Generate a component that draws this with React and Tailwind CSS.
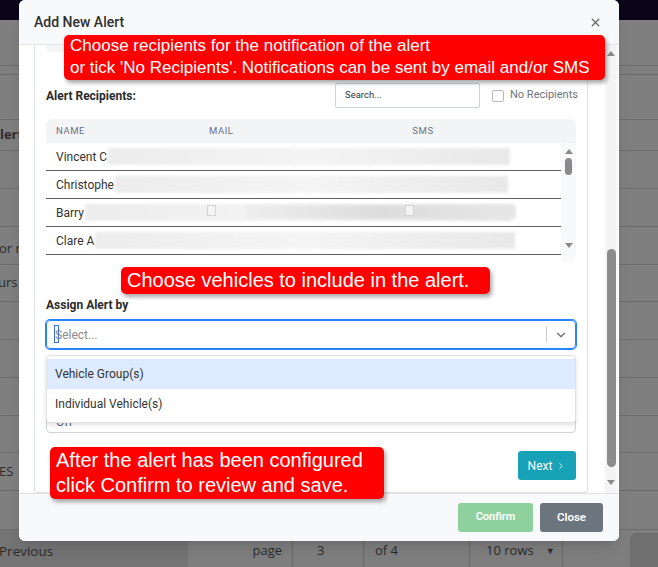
import { X, ChevronDown, ChevronRight } from 'lucide-react'

const BG_ROWS = [
  { h: 'h-[46px]' },
  { h: 'h-[9px]' },
  { h: 'h-[45px]' },
  { h: 'h-[31px]', text: 'Alert', cls: '-ml-[9px] font-bold' },
  { h: 'h-[38px]' },
  { h: 'h-[38px]' },
  { h: 'h-[38px]', text: 'or m', cls: '-ml-[1px] pt-[6px]' },
  { h: 'h-[37px]', text: 'urs ', tail: 'i', cls: '-ml-[2px]' },
  { h: 'h-[38px]' },
  { h: 'h-[38px]' },
  { h: 'h-[38px]' },
  { h: 'h-[37px]' },
  { h: 'h-[38px]', text: 'ES', cls: '-ml-[1px]' },
  { h: 'h-[39px]' },
]

const RECIPIENTS = [
  { name: 'Vincent C', blur: 'mr-[51px]' },
  { name: 'Christophe', blur: 'mr-[53px]' },
  { name: 'Barry', blur: 'mr-[49px]', marks: true },
  { name: 'Clare A', blur: 'mr-[46px]' },
]

function Background() {
  return (
    <div className="flex h-full flex-col font-['Open_Sans',sans-serif] text-[13px] text-[#2b2b2b]">
      <div className="h-[20px] shrink-0 bg-[#0a0617]" />
      {BG_ROWS.map((r, i) => (
        <div key={i} className={`${r.h} flex shrink-0 items-center overflow-hidden whitespace-nowrap border-b border-[#6b6b6b]`}>
          {r.text && (
            <span className={r.cls}>
              {r.text}
              {r.tail && <span className="text-[#8a5a10]">{r.tail}</span>}
            </span>
          )}
        </div>
      ))}
      <div className="flex flex-1 items-stretch whitespace-nowrap">
        <div className="flex w-[188px] items-center bg-[#747474] pt-[5px] text-[13.5px]">
          <span className="-ml-[1px]">Previous</span>
        </div>
        <div className="flex w-[442px] items-stretch bg-[#7e7e7e] text-[13px]">
          <div className="flex w-[104px] items-center justify-end pr-[10px] pt-[5px]">page</div>
          <div className="flex w-[71px] items-center border-l border-[#696969] pl-[24px] pt-[5px]">3</div>
          <div className="flex w-[106px] items-center border-l border-[#696969] pl-[11px] pt-[5px]">of 4</div>
          <div className="flex w-[93px] items-center border-l border-[#696969] pl-[16px] pt-[5px]">
            <span>10 rows</span>
            <span className="ml-[12px] text-[9px]">▼</span>
          </div>
          <div className="flex-1 border-l border-[#696969]" />
        </div>
        <div className="flex-1 pt-[3px]">
          <div className="h-full rounded-tl-md bg-[#6f6f6f]" />
        </div>
      </div>
    </div>
  )
}

function Tip({ className, children }) {
  return (
    <div
      className={`absolute whitespace-nowrap rounded-[5px] bg-[#ff0000] font-['Liberation_Sans',Arial,sans-serif] text-white shadow-[2px_3px_4px_rgba(0,0,0,0.35)] ${className}`}
    >
      {children}
    </div>
  )
}

function Arrow({ up }) {
  return (
    <div className="flex items-center justify-center">
      <div
        className={`h-0 w-0 border-x-[4px] border-x-transparent ${
          up ? 'border-b-[5px] border-b-[#8a8a8a]' : 'border-t-[5px] border-t-[#8a8a8a]'
        }`}
      />
    </div>
  )
}

function RecipientsTable() {
  return (
    <div className="mt-[11px] overflow-hidden rounded-md">
      <div className="flex h-[24px] items-center bg-[#f3f4f6] text-[9.5px] tracking-[0.06em] text-[#6b7280]">
        <div className="w-[153px] pl-[10px]">NAME</div>
        <div className="w-[122px] pl-[10px]">MAIL</div>
        <div className="w-[204px] text-center">SMS</div>
      </div>
      <div className="flex h-[119px]">
        <div className="w-[515px] bg-white">
          {RECIPIENTS.map((r) => (
            <div key={r.name} className="relative flex h-[28px] items-center border-b border-[#606060] pl-[10px] text-[12px] text-[#333]">
              <span className="whitespace-nowrap">{r.name}</span>
              <div className={`ml-[1px] h-[17px] flex-1 ${r.blur} bg-gradient-to-r from-[#ececec] via-[#f4f4f4] to-[#e8e8e8] blur-[1.5px]`} />
              {r.marks && (
                <>
                  <div className="absolute left-[200px] top-[6px] h-[14px] w-[270px] bg-gradient-to-r from-[#eeeeee] via-[#dcdcdc] to-[#e6e6e6] blur-[1.5px]" />
                  <div className="absolute left-[161px] top-[6px] h-[11px] w-[9px] border border-[#d4d4d4] bg-[#f4f4f4]" />
                  <div className="absolute left-[359px] top-[6px] h-[11px] w-[9px] border border-[#d4d4d4] bg-[#f4f4f4]" />
                </>
              )}
            </div>
          ))}
        </div>
        <div className="flex w-[15px] flex-col rounded-br-md bg-[#f8f9fa] pt-[6px]">
          <Arrow up />
          <div className="mx-auto mt-[4px] h-[17px] w-[7px] rounded-full bg-[#8a8a8a]" />
          <div className="flex-1" />
          <div className="mb-[14px]">
            <Arrow />
          </div>
        </div>
      </div>
    </div>
  )
}

export default function App() {
  return (
    <div className="relative h-[567px] w-[658px] overflow-hidden bg-[#7f7f7f]">
      <Background />

      <div className="absolute left-[19px] top-0 flex h-[541px] w-[600px] flex-col overflow-hidden rounded-md bg-white font-['Roboto',sans-serif] text-[#333] shadow-lg">
        <div className="flex h-[45px] shrink-0 items-center justify-between border-b border-[#e3e6ea] bg-[#f8f9fa] pl-[15px] pr-[17px]">
          <span className="text-[14px] font-medium text-[#2f2f2f]">Add New Alert</span>
          <X size={13} strokeWidth={2.5} className="text-[#6b6b6b]" />
        </div>

        <div className="flex h-[448px] shrink-0">
          <div className="w-[15px]" />
          <div className="flex w-[554px] flex-col rounded-b-[4px] border-x border-b border-[#dee2e6] px-[11px] pb-[11px]">
            <div className="h-[7px] rounded-b-[6px] bg-[#f3f4f6]" />

            <div className="mt-[31px] flex h-[25px] items-center">
              <span className="flex-1 text-[12px] font-bold text-[#2b2b2b]">Alert Recipients:</span>
              <div className="flex h-[25px] w-[145px] items-center rounded-[2px] border border-[#ced4da] pl-[9px] text-[9.5px] text-[#333]">
                Search...
              </div>
              <div className="ml-[12px] h-[12px] w-[12px] rounded-[2px] border border-[#b8b8b8] bg-white" />
              <span className="ml-[6px] w-[66px] whitespace-nowrap text-[11px] text-[#6c757d]">No Recipients</span>
            </div>

            <RecipientsTable />

            <div className="mt-[34px] text-[12px] font-bold leading-[18px] text-[#2b2b2b]">Assign Alert by</div>

            <div className="relative mt-[6px]">
              <div className="flex h-[29px] items-center rounded-[4px] border border-[#2684ff] pl-[8px] text-[12px] text-[#8a8a8a] shadow-[0_0_0_1px_#2684ff]">
                <span className="relative">
                  <span className="absolute -left-[1px] -top-[1px] h-[18px] w-[5px] border border-[#3b6fe0]" />
                  Select...
                </span>
                <div className="flex-1" />
                <div className="h-[15px] w-px bg-[#cccccc]" />
                <div className="flex w-[28px] justify-center">
                  <ChevronDown size={14} strokeWidth={2} className="text-[#6b6b6b]" />
                </div>
              </div>

              <div className="absolute left-0 right-0 top-[35px] z-10 rounded-[4px] border border-[#e2e2e2] bg-white py-[3px] text-[12px] text-[#333] shadow-[0_2px_4px_rgba(0,0,0,0.12)]">
                <div className="flex h-[30px] items-center bg-[#deebff] pl-[8px]">Vehicle Group(s)</div>
                <div className="flex h-[30px] items-center pl-[8px]">Individual Vehicle(s)</div>
              </div>
            </div>

            <div className="h-[55px]" />
            <div className="flex h-[29px] items-center rounded-[4px] border border-[#ced4da] pl-[9px] pt-[6px] text-[12px] text-[#666]">Off</div>

            <div className="mt-[18px] flex justify-end">
              <div className="flex h-[29px] w-[58px] items-center justify-center gap-[4px] rounded-[3px] bg-[#17a2b8] text-[12px] text-white">
                <span>Next</span>
                <ChevronRight size={10} strokeWidth={2} />
              </div>
            </div>
          </div>
          <div className="w-[17px]" />
          <div className="flex w-[12px] flex-col bg-[#f4f4f4]">
            <div className="flex h-[16px] items-center justify-center">
              <Arrow up />
            </div>
            <div className="flex flex-1 flex-col justify-end pb-[8px]">
              <div className="mx-auto h-[218px] w-[9px] rounded-full bg-[#8c8c8c]" />
            </div>
            <div className="flex h-[14px] items-center justify-center">
              <Arrow />
            </div>
            <div className="h-[4px]" />
          </div>
          <div className="w-[2px]" />
        </div>

        <div className="flex flex-1 items-start justify-end gap-[7px] border-t border-[#dee2e6] bg-[#f8f9fa] pr-[16px] pt-[9px]">
          <div className="flex h-[29px] w-[75px] items-center justify-center rounded-[3px] bg-[#8fd19e] text-[11px] font-semibold text-white">
            Confirm
          </div>
          <div className="flex h-[29px] w-[63px] items-center justify-center rounded-[3px] bg-[#6c757d] text-[11.5px] font-semibold text-white">
            Close
          </div>
        </div>
      </div>

      <Tip className="left-[64px] top-[35px] h-[45px] w-[541px] pl-[6px] text-[17px] leading-[22px]">
        Choose recipients for the notification of the alert
        <br />
        or tick 'No Recipients'. Notifications can be sent by email and/or SMS
      </Tip>
      <Tip className="left-[121px] top-[267px] h-[27px] w-[369px] pl-[6px] text-[20px] leading-[27px]">
        Choose vehicles to include in the alert.
      </Tip>
      <Tip className="left-[50px] top-[447px] h-[52px] w-[334px] pl-[6px] pt-[1px] text-[20px] leading-[25px]">
        After the alert has been configured
        <br />
        click Confirm to review and save.
      </Tip>
    </div>
  )
}
